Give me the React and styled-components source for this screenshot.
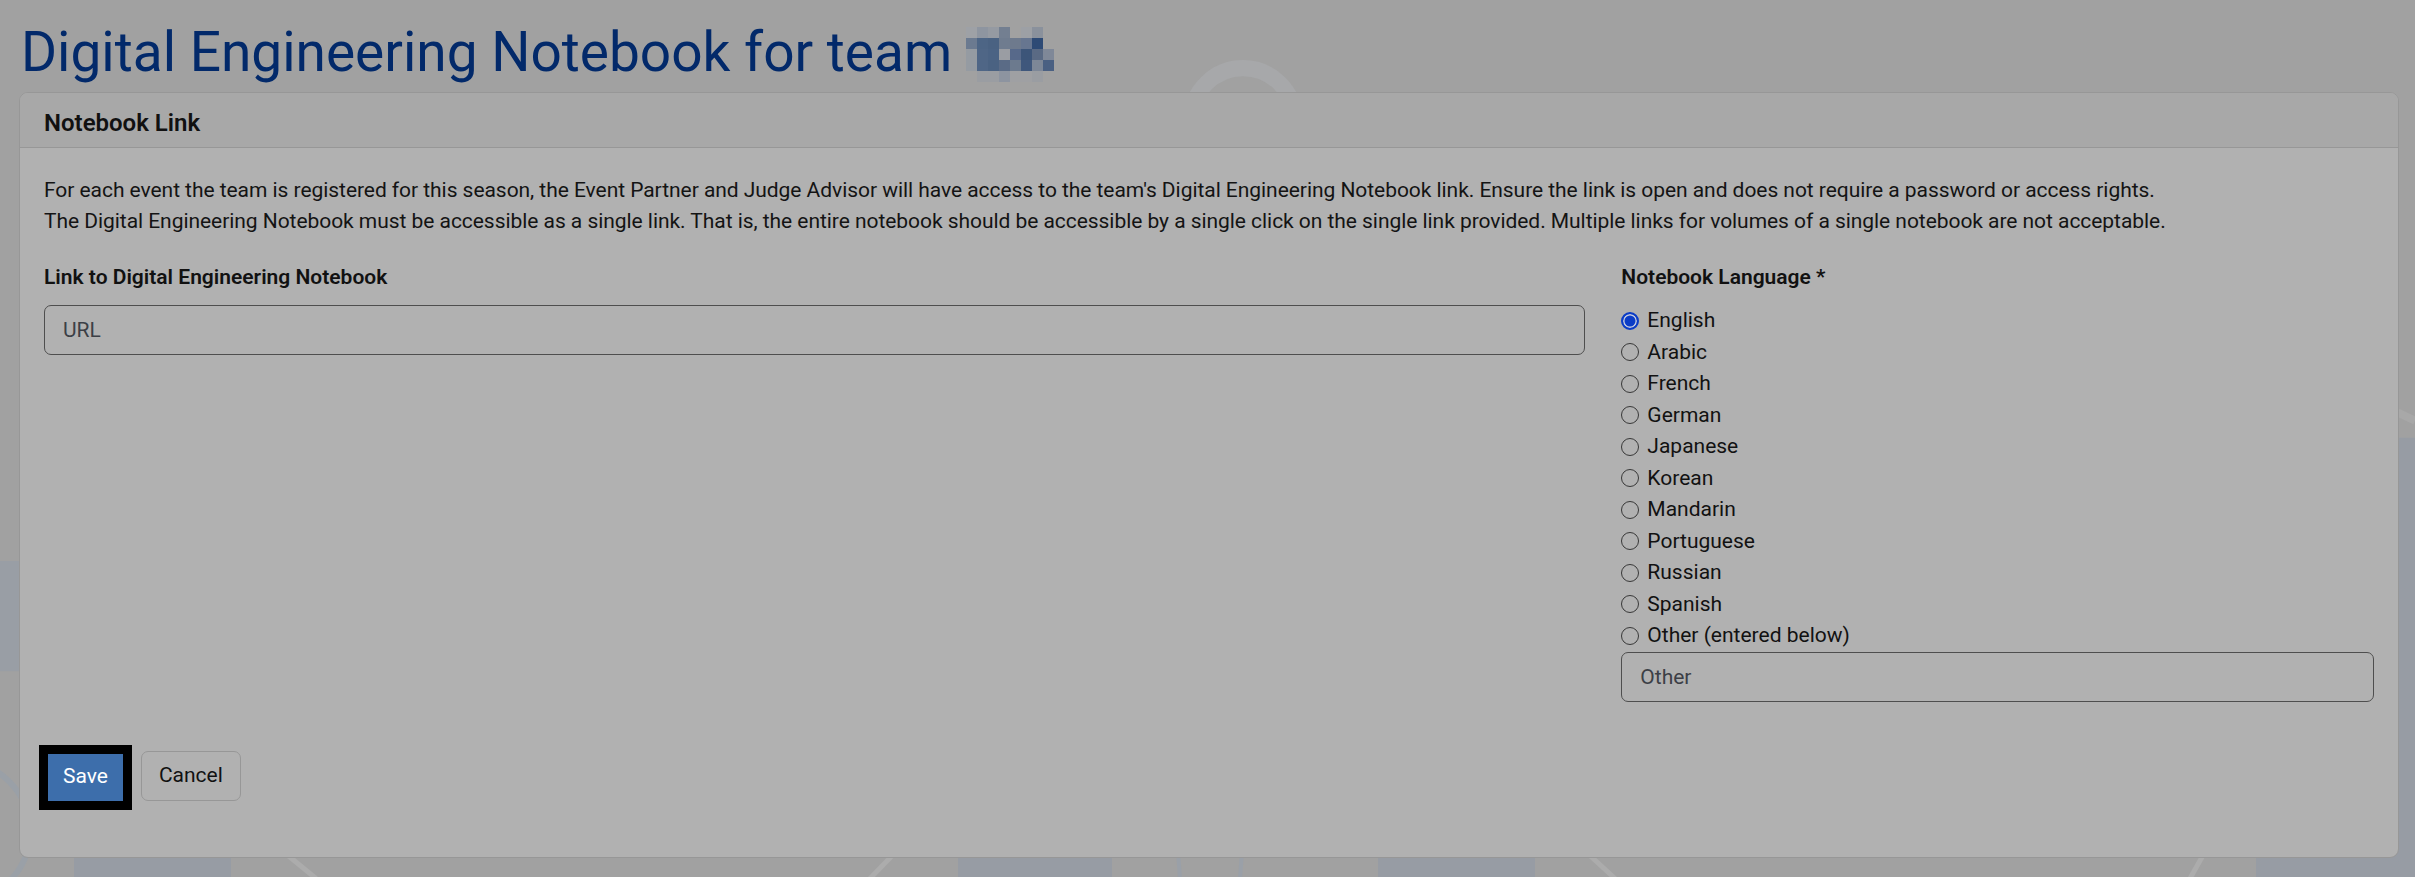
import React from "react";
import styled, { createGlobalStyle } from "styled-components";

const GlobalStyle = createGlobalStyle`
  html, body {
    margin: 0;
    padding: 0;
  }
  body {
    background: #a1a1a1;
    font-family: Roboto, "Segoe UI", "Noto Sans", sans-serif;
    color: #141414;
  }
  *, *::before, *::after {
    box-sizing: border-box;
  }
`;

const Page = styled.div`
  position: relative;
  min-height: 877px;
  padding: 19px 16px 21px 19px;
  overflow: hidden;
`;

const Backdrop = styled.svg`
  position: absolute;
  inset: 0;
  width: 100%;
  height: 100%;
  z-index: 0;
  pointer-events: none;
`;

const Title = styled.h1`
  position: relative;
  z-index: 1;
  display: flex;
  align-items: center;
  gap: 14px;
  margin: 0 0 7px 2px;
  font-size: 55px;
  font-weight: 400;
  line-height: 66px;
  color: #02296a;
`;

const Mosaic = styled.svg`
  display: block;
  width: 88px;
  height: 55px;
  margin-top: 5px;
`;

const Card = styled.section`
  position: relative;
  z-index: 1;
  background: #b1b1b1;
  border: 1.5px solid #979797;
  border-radius: 9px;
  overflow: hidden;
`;

const CardHeader = styled.div`
  background: #a8a8a8;
  border-bottom: 1.5px solid #979797;
  padding: 15px 24px 7px;
  font-size: 24px;
  font-weight: 600;
  line-height: 31.5px;
  color: #111;
`;

const CardBody = styled.div`
  padding: 27px 24px 24px;
  font-size: 21px;
  line-height: 31.5px;
`;

const Intro = styled.div`
  margin-bottom: 24px;
  letter-spacing: -0.05px;
`;

const Row = styled.div`
  display: flex;
  margin: 0 -18px;
`;

const Col = styled.div`
  flex: 0 0 ${(p) => p.$size}%;
  max-width: ${(p) => p.$size}%;
  padding: 0 18px;
`;

const FieldLabel = styled.div`
  font-weight: 600;
  margin-bottom: 12px;
  color: #111;
`;

const TextInput = styled.input`
  display: block;
  width: 100%;
  height: 50px;
  padding: 0 18px;
  border: 1.5px solid #4e4e4e;
  border-radius: 7px;
  background: transparent;
  font: inherit;
  color: #222;

  &::placeholder {
    color: #3c3f46;
  }
`;

const RadioList = styled.div`
  display: flex;
  flex-direction: column;
`;

const RadioItem = styled.label`
  display: flex;
  align-items: center;
  gap: 8px;
  height: 31.5px;
  color: #121212;
`;

const Radio = styled.input`
  appearance: none;
  width: 18px;
  height: 18px;
  margin: 0;
  flex-shrink: 0;
  border: 1.5px solid #383838;
  border-radius: 50%;
  background: transparent;

  &:checked {
    border: 2px solid #0b3cc6;
    background: #0b3cc6;
    box-shadow: inset 0 0 0 1.5px #c9cee0;
  }
`;

const Actions = styled.div`
  display: flex;
  align-items: flex-end;
  margin: 49px 0 32px;
`;

const SaveButton = styled.button`
  height: 47px;
  margin-left: 4px;
  padding: 0 15px;
  border: none;
  border-radius: 0;
  outline: 9px solid #000;
  background: #3d6eab;
  color: #fff;
  font: inherit;
`;

const CancelButton = styled.button`
  height: 50px;
  margin-left: 18px;
  padding: 0 17px;
  border: 1.5px solid #979797;
  border-radius: 7px;
  background: transparent;
  color: #111;
  font: inherit;
`;

const languages = [
  "English",
  "Arabic",
  "French",
  "German",
  "Japanese",
  "Korean",
  "Mandarin",
  "Portuguese",
  "Russian",
  "Spanish",
  "Other (entered below)",
];

// blurred team number, 8 x 5 cells of 11px
const mosaic = [
  ["#9ea1a6", "#8e95a0", "#959aa2", "#737f91", null, "#9da0a5", "#8a919c", null],
  ["#6b7a90", "#4d6585", "#4a6282", "#6f7c8f", "#6e7a8d", "#677690", "#2d4a75", null],
  ["#959ba2", "#4f6686", "#4b6384", "#9a9da3", "#57698a", "#3c5579", "#5a6a84", "#7f8898"],
  ["#959ba2", "#4f6686", "#4a6282", "#5a6b86", "#6c7a8e", "#3f577c", "#7d8797", "#4a6082"],
  [null, "#9a9da2", "#9a9da2", "#8d94a0", "#9fa0a3", "#9fa0a3", "#9a9da2", null],
];

function TeamMosaic() {
  return (
    <Mosaic viewBox="0 0 88 55" shapeRendering="crispEdges" aria-hidden="true">
      {mosaic.map((row, r) =>
        row.map((c, i) =>
          c ? <rect key={`${r}-${i}`} x={i * 11} y={r * 11} width="11" height="11" fill={c} /> : null
        )
      )}
    </Mosaic>
  );
}

function Wallpaper() {
  return (
    <Backdrop viewBox="0 0 2415 877" preserveAspectRatio="none" aria-hidden="true">
      <circle cx="1243" cy="120" r="52" fill="none" stroke="#a7a8aa" strokeWidth="16" />
      <rect x="0" y="560" width="40" height="110" fill="#999ea5" />
      <circle cx="-40" cy="830" r="70" fill="none" stroke="#9aa0a7" strokeWidth="6" />
      <rect x="2380" y="437" width="40" height="440" fill="#979ca4" />
      <line x1="2330" y1="380" x2="2415" y2="420" stroke="#a8a8a8" strokeWidth="8" />
      <rect x="74" y="830" width="157" height="60" rx="6" fill="#979ca4" />
      <rect x="958" y="830" width="154" height="60" rx="6" fill="#979ca4" />
      <rect x="1378" y="830" width="157" height="60" rx="6" fill="#979ca4" />
      <rect x="2256" y="830" width="170" height="60" rx="6" fill="#979ca4" />
      <line x1="277" y1="845" x2="316" y2="877" stroke="#acacac" strokeWidth="5" />
      <line x1="901" y1="845" x2="870" y2="877" stroke="#acacac" strokeWidth="5" />
      <line x1="1580" y1="845" x2="1615" y2="877" stroke="#acacac" strokeWidth="5" />
      <line x1="2208" y1="845" x2="2190" y2="877" stroke="#acacac" strokeWidth="5" />
      <line x1="1178" y1="850" x2="1180" y2="877" stroke="#9aa0a8" strokeWidth="4" />
      <line x1="1242" y1="850" x2="1240" y2="877" stroke="#9aa0a8" strokeWidth="4" />
    </Backdrop>
  );
}

export default function App() {
  return (
    <>
      <GlobalStyle />
      <Page>
        <Wallpaper />
        <Title>
          Digital Engineering Notebook for team
          <TeamMosaic />
        </Title>
        <Card>
          <CardHeader>Notebook Link</CardHeader>
          <CardBody>
            <Intro>
              <div>
                For each event the team is registered for this season, the Event Partner and Judge Advisor will have
                access to the team's Digital Engineering Notebook link. Ensure the link is open and does not require a
                password or access rights.
              </div>
              <div>
                The Digital Engineering Notebook must be accessible as a single link. That is, the entire notebook
                should be accessible by a single click on the single link provided. Multiple links for volumes of a
                single notebook are not acceptable.
              </div>
            </Intro>
            <Row>
              <Col $size={66.6667}>
                <FieldLabel>Link to Digital Engineering Notebook</FieldLabel>
                <TextInput type="text" placeholder="URL" />
              </Col>
              <Col $size={33.3333}>
                <FieldLabel>Notebook Language *</FieldLabel>
                <RadioList>
                  {languages.map((lang, i) => (
                    <RadioItem key={lang}>
                      <Radio type="radio" name="language" defaultChecked={i === 0} />
                      {lang}
                    </RadioItem>
                  ))}
                </RadioList>
                <TextInput type="text" placeholder="Other" />
              </Col>
            </Row>
            <Actions>
              <SaveButton type="button">Save</SaveButton>
              <CancelButton type="button">Cancel</CancelButton>
            </Actions>
          </CardBody>
        </Card>
      </Page>
    </>
  );
}
